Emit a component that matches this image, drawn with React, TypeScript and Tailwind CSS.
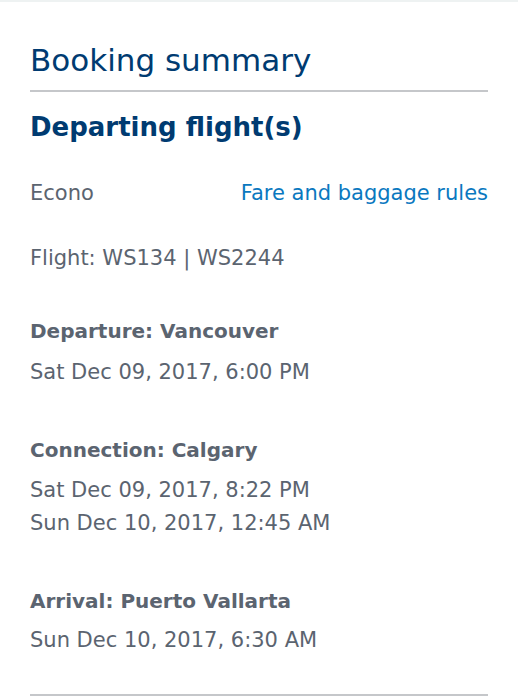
import React from "react";

function Label({ children, className = "" }: { children: React.ReactNode; className?: string }) {
  return <div className={`font-bold text-[20px] leading-[33px] text-[#5b6470] ${className}`}>{children}</div>;
}

function Line({ children, className = "" }: { children: React.ReactNode; className?: string }) {
  return <div className={`text-[21px] leading-[33px] text-[#5b6470] ${className}`}>{children}</div>;
}

export default function App() {
  return (
    <div className="w-[518px] h-[698px] overflow-hidden bg-white" style={{ fontFamily: '"DejaVu Sans", sans-serif' }}>
      <div className="h-[2px] bg-[#eef2f2]" />
      <div className="px-[30px] pt-[38px]">
        <h1 className="text-[31px] leading-[40px] text-[#003b71]">Booking summary</h1>
        <div className="mt-[10px] h-[2px] bg-[#c5c7ca]" />
        <h2 className="mt-[17px] text-[26px] leading-[36px] font-bold text-[#003b71]">Departing flight(s)</h2>
        <div className="mt-[32px] flex items-center justify-between">
          <Line>Econo</Line>
          <a className="text-[21px] leading-[33px] text-[#0a78bf]">Fare and baggage rules</a>
        </div>
        <Line className="mt-[32px]">Flight: WS134 | WS2244</Line>

        <Label className="mt-[40px]">Departure: Vancouver</Label>
        <Line className="mt-[8px]">Sat Dec 09, 2017, 6:00 PM</Line>

        <Label className="mt-[45px]">Connection: Calgary</Label>
        <Line className="mt-[7px]">Sat Dec 09, 2017, 8:22 PM</Line>
        <Line>Sun Dec 10, 2017, 12:45 AM</Line>

        <Label className="mt-[45px]">Arrival: Puerto Vallarta</Label>
        <Line className="mt-[6px]">Sun Dec 10, 2017, 6:30 AM</Line>

        <div className="mt-[37px] h-[2px] bg-[#c5c7ca]" />
      </div>
    </div>
  );
}
